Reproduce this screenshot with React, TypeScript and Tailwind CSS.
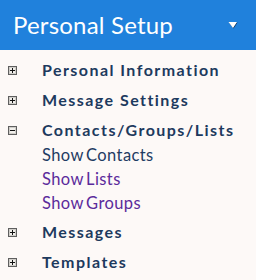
import React from "react";

const PlusBox = ({ minus }: { minus?: boolean }) => (
  <svg width="9" height="9" viewBox="0 0 9 9" className="shrink-0">
    <rect x="0.5" y="0.5" width="8" height="8" fill="#f2f0ec" stroke="#5f5f5f" />
    <rect x="1.5" y="1.5" width="6" height="6" fill="none" stroke="#d0cec9" strokeWidth="1" />
    <line x1="2" y1="4.5" x2="7" y2="4.5" stroke="#111" strokeWidth="1" />
    {!minus && <line x1="4.5" y1="2" x2="4.5" y2="7" stroke="#111" strokeWidth="1" />}
  </svg>
);

const Main = ({ label, minus }: { label: string; minus?: boolean }) => (
  <div className="flex items-center h-[30px]">
    <div className="w-[42px] pl-[8px] flex items-center">
      <PlusBox minus={minus} />
    </div>
    <span className="text-[16px] font-bold text-[#1d3a5e] tracking-[1.45px]">{label}</span>
  </div>
);

const Sub = ({ label, visited }: { label: string; visited?: boolean }) => (
  <div className={`h-[24px] flex items-center pl-[42px] text-[16.5px] tracking-[0.4px] [word-spacing:-2px] ${visited ? "text-[#5b2b9b]" : "text-[#1f3c63]"}`}>
    {label}
  </div>
);

export default function App() {
  return (
    <div className="w-[256px] h-[280px] bg-[#fdf9f7] overflow-hidden" style={{ fontFamily: "Lato, 'Liberation Sans', sans-serif" }}>
      <div className="h-[50px] bg-[#2081dc] flex items-center justify-between pl-[13px] pr-[18px]">
        <span className="text-white text-[24px] tracking-[0.2px]">Personal Setup</span>
        <svg width="10" height="7" viewBox="0 0 10 7">
          <polygon points="1,0.5 9.5,0.5 5.5,6.5" fill="#0a2b50" />
          <polygon points="0.5,0 9,0 5,6" fill="#fff" />
        </svg>
      </div>
      <div className="pt-[5px]">
        <Main label="Personal Information" />
        <Main label="Message Settings" />
        <Main label="Contacts/Groups/Lists" minus />
        <div className="-mt-[2px] mb-[2px]">
          <Sub label="Show Contacts" />
          <Sub label="Show Lists" visited />
          <Sub label="Show Groups" visited />
        </div>
        <Main label="Messages" />
        <Main label="Templates" />
      </div>
    </div>
  );
}
